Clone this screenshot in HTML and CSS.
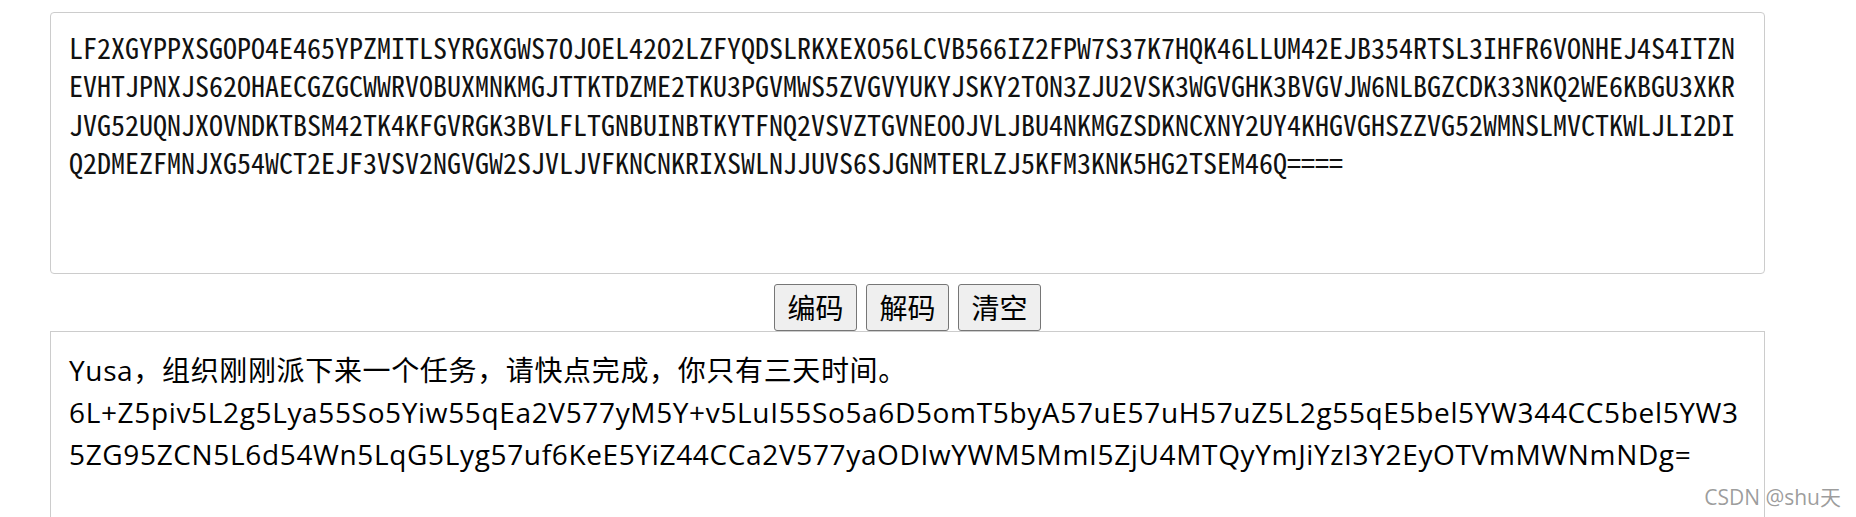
FILE: index.html
```html
<!DOCTYPE html>
<html lang="zh-CN">
<head>
    <meta charset="UTF-8">
    <meta name="viewport" content="width=device-width, initial-scale=1.0">
    <title>Base32 编码解码</title>
    <link rel="stylesheet" href="styles.css">
</head>
<body>

    <div class="box">
        <textarea class="code-in" id="codeIn" spellcheck="false">LF2XGYPPXSGOPO4E465YPZMITLSYRGXGWS7OJOEL42O2LZFYQDSLRKXEXO56LCVB566IZ2FPW7S37K7HQK46LLUM42EJB354RTSL3IHFR6VONHEJ4S4ITZNEVHTJPNXJS62OHAECGZGCWWRVOBUXMNKMGJTTKTDZME2TKU3PGVMWS5ZVGVYUKYJSKY2TON3ZJU2VSK3WGVGHK3BVGVJW6NLBGZCDK33NKQ2WE6KBGU3XKRJVG52UQNJXOVNDKTBSM42TK4KFGVRGK3BVLFLTGNBUINBTKYTFNQ2VSVZTGVNEOOJVLJBU4NKMGZSDKNCXNY2UY4KHGVGHSZZVG52WMNSLMVCTKWLJLI2DIQ2DMEZFMNJXG54WCT2EJF3VSV2NGVGW2SJVLJVFKNCNKRIXSWLNJJUVS6SJGNMTERLZJ5KFM3KNK5HG2TSEM46Q====</textarea>

        <div class="btns">
            <button type="button" id="btnEncode">编码</button>
            <button type="button" id="btnDecode">解码</button>
            <button type="button" id="btnClear">清空</button>
        </div>

        <textarea class="code-out" id="codeOut" spellcheck="false">Yusa，组织刚刚派下来一个任务，请快点完成，你只有三天时间。
6L+Z5piv5L2g5Lya55So5Yiw55qEa2V577yM5Y+v5LuI55So5a6D5omT5byA57uE57uH57uZ5L2g55qE5bel5YW344CC5bel5YW35ZG95ZCN5L6d54Wn5LqG5Lyg57uf6KeE5YiZ44CCa2V577yaODIwYWM5MmI5ZjU4MTQyYmJiYzI3Y2EyOTVmMWNmNDg=</textarea>
    </div>

    <span class="mark">CSDN @shu天</span>

    <script>
        const abc = "ABCDEFGHIJKLMNOPQRSTUVWXYZ234567";
        const codeIn = document.getElementById("codeIn");
        const codeOut = document.getElementById("codeOut");

        function encode32(str) {
            const bytes = new TextEncoder().encode(str);
            let bits = "", out = "";
            for (const b of bytes) bits += b.toString(2).padStart(8, "0");
            for (let i = 0; i < bits.length; i += 5) {
                out += abc[parseInt(bits.slice(i, i + 5).padEnd(5, "0"), 2)];
            }
            while (out.length % 8) out += "=";
            return out;
        }

        function decode32(str) {
            let bits = "";
            for (const c of str.replace(/=+$/, "")) {
                const n = abc.indexOf(c.toUpperCase());
                if (n < 0) continue;
                bits += n.toString(2).padStart(5, "0");
            }
            const bytes = [];
            for (let i = 0; i + 8 <= bits.length; i += 8) {
                bytes.push(parseInt(bits.slice(i, i + 8), 2));
            }
            return new TextDecoder().decode(new Uint8Array(bytes));
        }

        document.getElementById("btnEncode").addEventListener("click", e => {
            codeIn.value = encode32(codeOut.value);
        });

        document.getElementById("btnDecode").addEventListener("click", e => {
            codeOut.value = decode32(codeIn.value);
        });

        document.getElementById("btnClear").addEventListener("click", e => {
            codeIn.value = "";
            codeOut.value = "";
        });
    </script>
</body>
</html>
```

FILE: styles.css
```css
body {
    margin: 8px;
    font-family: "Noto Sans CJK SC", sans-serif;
}

.box {
    width: 1715px;
    margin-left: 42px;
    display: flex;
    flex-direction: column;
}

textarea {
    box-sizing: border-box;
    width: 100%;
    height: 262px;
    margin: 0;
    color: #000;
    background: #fff;
    resize: none;
    outline: none;
    word-break: break-all;
}

.code-in {
    margin-top: 4px;
    padding: 15px 18px 18px;
    border: 1px solid #ccc;
    border-radius: 4px;
    font-family: "Noto Sans Mono CJK SC", "Liberation Mono", monospace;
    font-size: 28px;
    line-height: 38.4px;
    color: #111;
}

.btns {
    display: flex;
    justify-content: center;
    gap: 9px;
    margin-top: 10px;
}

.btns button {
    padding: 3px 12.5px;
    border: 1px solid #767676;
    border-radius: 3px;
    background-color: #efefef;
    color: #000;
    font-family: "Noto Sans CJK SC", sans-serif;
    font-size: 28px;
    line-height: 39px;
}

.code-out {
    padding: 17px 18px;
    border: 1px solid #ccc;
    border-radius: 0;
    font-family: "Open Sans", "Noto Sans CJK SC", sans-serif;
    font-size: 28px;
    line-height: 42px;
    letter-spacing: 0.65px;
}

.mark {
    position: absolute;
    top: 481px;
    right: 15px;
    font-family: "Open Sans", "Noto Sans CJK SC", sans-serif;
    font-size: 21px;
    color: rgba(140, 140, 140, 0.85);
}
```
